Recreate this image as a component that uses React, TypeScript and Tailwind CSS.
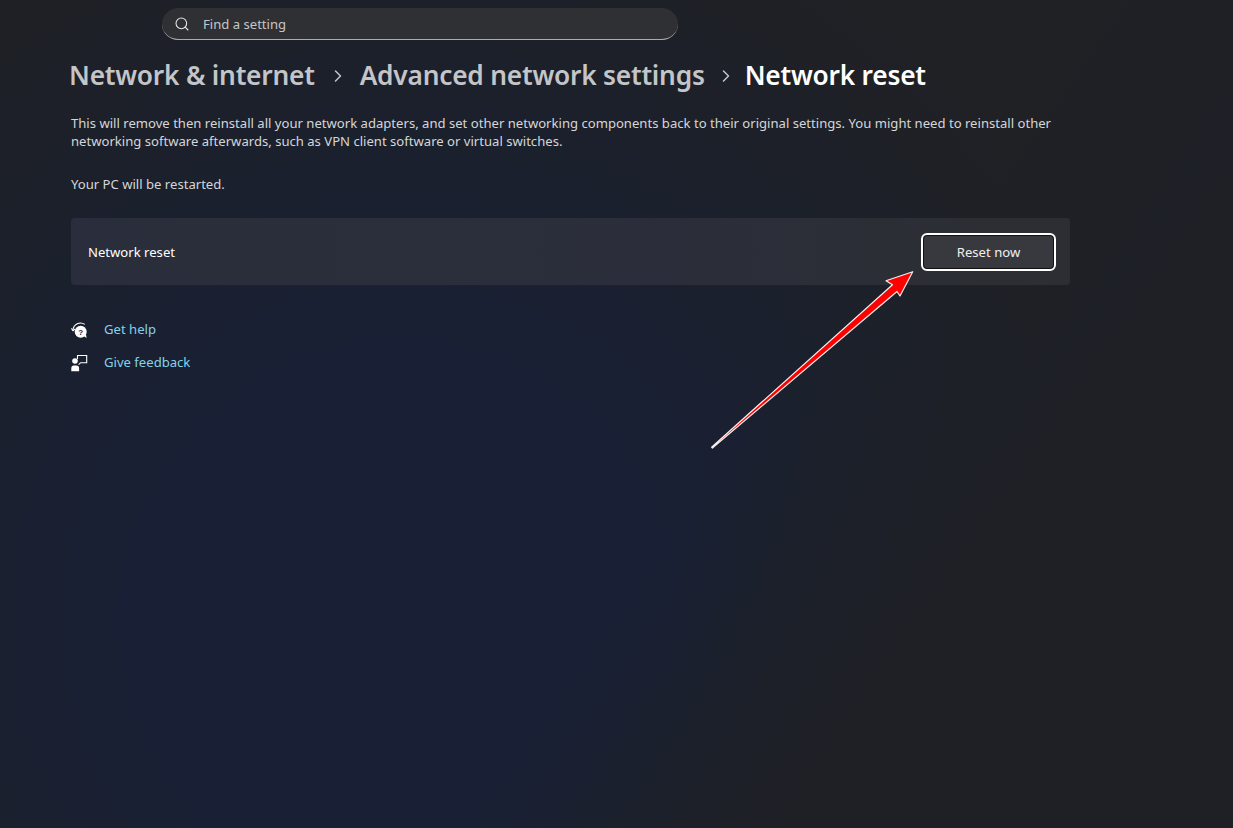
import { ChevronRight, Search } from 'lucide-react';

function HelpIcon() {
  return (
    <svg width="18" height="18" viewBox="0 0 18 18" className="shrink-0">
      <path d="M2 9A7.5 7.5 0 0 1 13.8 3.4" fill="none" stroke="#fff" strokeWidth="1.1" />
      <path d="M0.4 7.4 2 9.8 4.2 7.9" fill="none" stroke="#fff" strokeWidth="1.1" />
      <circle cx="9.7" cy="10.7" r="6" fill="#fff" />
      <path d="M12.5 15l3.2 2-.9-4z" fill="#fff" />
      <text x="9.7" y="13.6" textAnchor="middle" fontSize="8" fontWeight="700" fill="#1a2035" fontFamily="Liberation Sans, sans-serif">?</text>
    </svg>
  );
}

function FeedbackIcon() {
  return (
    <svg width="18" height="18" viewBox="0 0 18 18" className="shrink-0">
      <circle cx="4" cy="7" r="2.8" fill="#fff" />
      <path d="M0.3 17.2v-3.2c0-1.6 1-2.6 2.4-2.6h2.8c1.6 0 2.6 1 2.6 2.6v3.2z" fill="#fff" />
      <path d="M6.5 5V1.5h9.2v7.2H9.6L7.6 10.6" fill="none" stroke="#fff" strokeWidth="1.1" />
    </svg>
  );
}

function Crumb({ label, muted }: { label: string; muted?: boolean }) {
  return <span className={muted ? 'text-[#c3c5c8]' : 'text-white'}>{label}</span>;
}

export default function App() {
  return (
    <div className="relative h-[828px] w-[1233px] overflow-hidden bg-[linear-gradient(125deg,transparent_58%,#1e2027_72%,#1f2025_100%),radial-gradient(ellipse_800px_800px_at_400px_620px,#192035_0%,#192035_35%,#1d2029_75%,#202124_100%)] font-['Noto_Sans','Open_Sans',sans-serif] text-white">
      <div className="pt-2">
        <div className="ml-[162px] flex h-8 w-[516px] items-center gap-[13px] rounded-[16px] border-b border-b-[#a9abad] bg-[#2f3033] pl-3 pt-px">
          <Search size={16} strokeWidth={1.6} className="text-[#e6e6e6]" />
          <span className="pt-[2px] text-[13.1px] text-[#c6c6c6]">Find a setting</span>
        </div>

        <div className="ml-[69px] mt-[16px] flex h-[40px] items-center text-[26.3px] font-semibold tracking-[-0.22px]">
          <Crumb label="Network & internet" muted />
          <ChevronRight size={20} strokeWidth={1.8} className="ml-[13px] mr-[12px] text-[#c3c5c8]" />
          <Crumb label="Advanced network settings" muted />
          <ChevronRight size={20} strokeWidth={1.8} className="ml-[11px] mr-[9px] text-[#c3c5c8]" />
          <Crumb label="Network reset" />
        </div>

        <div className="ml-[71px] mt-[18px] w-[1000px] text-[13.1px] leading-[18px] text-[#d5d6d8]">
          <p>
            This will remove then reinstall all your network adapters, and set other networking components back to their original settings. You might need to reinstall other
            <br />
            networking software afterwards, such as VPN client software or virtual switches.
          </p>
          <p className="mt-[25px]">Your PC will be restarted.</p>
        </div>

        <div className="ml-[71px] mt-[25px] flex h-[67px] w-[999px] items-center justify-between rounded-[4px] bg-[linear-gradient(90deg,#2a2e3c_0%,#2b2e3a_60%,#2d2e33_100%)] pl-[17px] pr-[14px] pt-px">
          <span className="pt-[2px] text-[13.1px] text-white">Network reset</span>
          <button className="flex h-[38px] w-[135px] items-center justify-center rounded-[6px] border-2 border-white bg-[#38393f] pt-[2px] text-[13.1px] text-[#f0f0f0] shadow-[inset_0_0_0_1px_#111]">
            Reset now
          </button>
        </div>

        <div className="ml-[71px] mt-[36px] flex flex-col gap-[15px] text-[13.1px] text-[#83d2e8]">
          <a className="flex h-[18px] items-center gap-[15px]">
            <HelpIcon />
            Get help
          </a>
          <a className="flex h-[18px] items-center gap-[15px]">
            <FeedbackIcon />
            Give feedback
          </a>
        </div>
      </div>

      {/* annotation arrow on top of the screenshot */}
      <svg className="absolute left-0 top-0" width="1233" height="828">
        <path
          d="M711.6 447.2 L712.4 448 L897 291.5 L900 296 L912.7 271.7 L886 280.7 L892.5 284.8 Z"
          fill="#ff0000"
          stroke="#f4eeee"
          strokeWidth="1.2"
          strokeLinejoin="round"
        />
      </svg>
    </div>
  );
}
